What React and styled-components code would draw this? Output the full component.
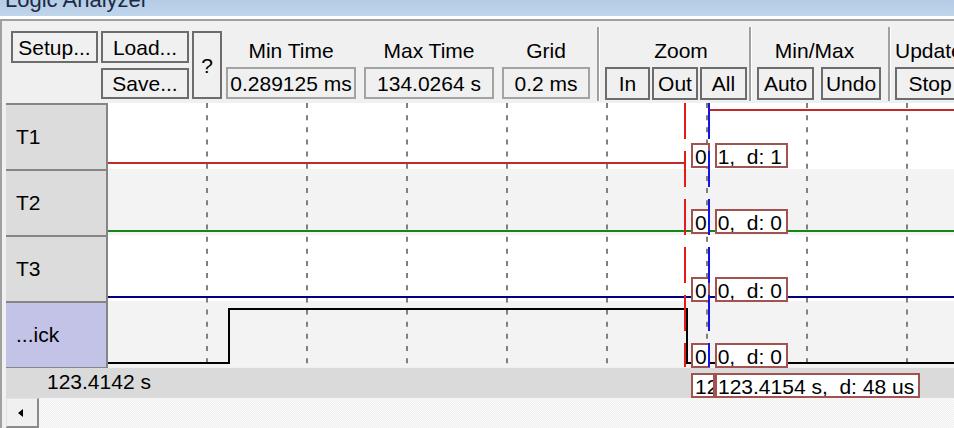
import React from 'react'
import styled, { createGlobalStyle } from 'styled-components'

const GlobalStyle = createGlobalStyle`
  html, body {
    margin: 0;
    padding: 0;
    background: #fff;
  }

  body {
    font-family: "Liberation Sans", Arial, sans-serif;
    font-size: 21px;
    color: #000;
    overflow: hidden;
  }
`

const Window = styled.div`
  width: 954px;
  height: 428px;
  overflow: hidden;
  display: flex;
  flex-direction: column;
`

const TitleBar = styled.div`
  flex-shrink: 0;
  height: 16px;
  margin-bottom: 3px;
  padding-left: 5px;
  overflow: hidden;
  background: linear-gradient(#b4cce5, #bfd5ec);
`

const TitleText = styled.div`
  margin-top: -12px;
  font-size: 22px;
  line-height: 24px;
  color: #1b2a44;
  white-space: nowrap;
`

const Frame = styled.div`
  flex: 1;
  min-height: 0;
  display: flex;
  flex-direction: column;
  background: #f0f0f0;
  border-top: 2px solid #a0a0a0;
  border-left: 2px solid #a0a0a0;
`

const Toolbar = styled.div`
  flex-shrink: 0;
  height: 82px;
  box-sizing: border-box;
  display: flex;
  align-items: flex-start;
  padding: 10px 0 0 9px;
  overflow: hidden;
  white-space: nowrap;
`

const FileGroup = styled.div`
  display: grid;
  grid-template-columns: 87px 88px 30px;
  grid-template-rows: 32px 31px;
  column-gap: 3px;
  row-gap: 5px;
`

const Button = styled.button`
  box-sizing: border-box;
  flex-shrink: 0;
  width: ${p => (p.$w ? `${p.$w}px` : 'auto')};
  height: ${p => (p.$h ? `${p.$h}px` : 'auto')};
  grid-column: ${p => p.$col || 'auto'};
  grid-row: ${p => p.$row || 'auto'};
  margin: 0;
  padding: 0;
  display: flex;
  align-items: center;
  justify-content: center;
  border: 2px solid #6c6c6c;
  background: #f0f0f0;
  font: inherit;
  line-height: 1;
  color: #000;
`

const Field = styled.div`
  flex-shrink: 0;
  display: flex;
  flex-direction: column;
  width: ${p => p.$w}px;
  margin-left: ${p => p.$ml}px;
`

const Caption = styled.div`
  height: 36px;
  box-sizing: border-box;
  padding: 9px ${p => p.$pr || 0}px 0 ${p => p.$pl || 0}px;
  line-height: 21px;
  text-align: ${p => p.$align || 'center'};
`

const ValueBox = styled.div`
  height: 32px;
  box-sizing: border-box;
  border: 2px solid #a3a3a3;
  line-height: 29px;
  text-align: center;
  overflow: hidden;
`

const Separator = styled.div`
  flex-shrink: 0;
  align-self: stretch;
  width: 2px;
  margin: -4px 0 2px ${p => p.$ml}px;
  background: #a0a0a0;
  border-right: 1px solid #fff;
`

const ButtonRow = styled.div`
  display: flex;
  gap: ${p => p.$gap}px;
`

const Chart = styled.div`
  flex-shrink: 0;
  display: flex;
  height: 265px;
  margin-left: 4px;
`

const Labels = styled.div`
  flex-shrink: 0;
  width: 102px;
  display: flex;
  flex-direction: column;
`

const SignalLabel = styled.div`
  height: 66px;
  box-sizing: border-box;
  display: flex;
  align-items: center;
  padding-left: 10px;
  background: ${p => (p.$active ? '#c3c3e8' : '#dcdcdc')};
  border-top: 2px solid #858585;
  border-right: 2px solid #858585;

  &:last-child {
    height: 67px;
    border-bottom: 1px solid #858585;
  }
`

const Plot = styled.div`
  position: relative;
  flex: 1;
  display: flex;
  flex-direction: column;
  overflow: hidden;
`

const Band = styled.div`
  flex-shrink: 0;
  height: 66px;
  background: ${p => (p.$shade ? '#f3f3f3' : '#fff')};
`

const Layer = styled.svg`
  position: absolute;
  left: 0;
  top: 0;
  pointer-events: none;
`

// value read-outs laid over the traces next to the cursors
const TagPair = styled.div`
  position: absolute;
  left: ${p => p.$left}px;
  top: ${p => p.$top}px;
  display: flex;
  gap: ${p => p.$gap}px;
`

const Tag = styled.div`
  height: 25px;
  max-width: ${p => (p.$max ? `${p.$max}px` : 'none')};
  box-sizing: border-box;
  padding: ${p => (p.$narrow ? '0 1px 0 2px' : '0 4px 0 1px')};
  overflow: hidden;
  border: 2px solid #a35252;
  background: #fff;
  line-height: 24px;
  white-space: pre;
`

const TimeBar = styled.div`
  position: relative;
  flex-shrink: 0;
  height: 30px;
  margin-left: 4px;
  padding-left: 41px;
  background: #dadada;
  line-height: 28px;
  white-space: nowrap;
`

const ScrollBar = styled.div`
  flex: 1;
  display: flex;
  margin-left: 4px;
  background-color: #f6f6f6;
  background-image: repeating-conic-gradient(#efefef 0 25%, #fbfbfb 0 50%);
  background-size: 2px 2px;
`

const ScrollButton = styled.div`
  width: 33px;
  box-sizing: border-box;
  display: flex;
  align-items: center;
  justify-content: center;
  background: #f0f0f0;
  border-top: 1px solid #e2e2e2;
  border-left: 1px solid #e2e2e2;
  border-right: 2px solid #8a8a8a;
  border-bottom: 2px solid #8a8a8a;
`

const Arrow = styled.span`
  width: 0;
  height: 0;
  margin-right: 4px;
  border-top: 4px solid transparent;
  border-bottom: 4px solid transparent;
  border-right: 5px solid #000;
`

const GRID_X = [99, 199, 299, 399, 499, 599, 699, 799]

const signals = [
  { name: 'T1', tagTop: 40, value: '1,  d: 1' },
  { name: 'T2', tagTop: 106, value: '0,  d: 0' },
  { name: 'T3', tagTop: 174, value: '0,  d: 0' },
  { name: '...ick', tagTop: 240, value: '0,  d: 0' },
]

const Traces = () => (
  <Layer width="846" height="264">
    {GRID_X.map(x => (
      <line key={x} x1={x} x2={x} y1="0" y2="264" stroke="#808080" strokeWidth="2" strokeDasharray="5 7.15" />
    ))}
    <g fill="none" strokeWidth="2">
      <polyline points="0,60 577,60" stroke="#c12a2a" />
      <polyline points="602,7 846,7" stroke="#c12a2a" />
      <polyline points="0,128 846,128" stroke="#138813" />
      <polyline points="0,194 846,194" stroke="#000080" />
      <polyline points="0,260 121,260 121,206 579,206 579,260 846,260" stroke="#000" />
    </g>
  </Layer>
)

const Cursors = () => (
  <Layer width="846" height="264">
    <line x1="577" x2="577" y1="0" y2="264" stroke="#e31b1b" strokeWidth="2" strokeDasharray="36 12" />
    <line x1="601" x2="601" y1="0" y2="264" stroke="#1414e6" strokeWidth="2" strokeDasharray="36 12" />
  </Layer>
)

const App = () => (
  <Window>
    <GlobalStyle />
    <TitleBar>
      <TitleText>Logic Analyzer</TitleText>
    </TitleBar>

    <Frame>
      <Toolbar>
        <FileGroup>
          <Button $col="1" $row="1">Setup...</Button>
          <Button $col="2" $row="1">Load...</Button>
          <Button $col="2" $row="2">Save...</Button>
          <Button $col="3" $row="1 / span 2">?</Button>
        </FileGroup>

        <Field $w={130} $ml={4}>
          <Caption>Min Time</Caption>
          <ValueBox>0.289125 ms</ValueBox>
        </Field>
        <Field $w={130} $ml={8}>
          <Caption>Max Time</Caption>
          <ValueBox>134.0264 s</ValueBox>
        </Field>
        <Field $w={88} $ml={8}>
          <Caption>Grid</Caption>
          <ValueBox>0.2 ms</ValueBox>
        </Field>

        <Separator $ml={7} />

        <Field $w={142} $ml={5}>
          <Caption $pl={10}>Zoom</Caption>
          <ButtonRow $gap={2}>
            <Button $w={45} $h={33}>In</Button>
            <Button $w={46} $h={33}>Out</Button>
            <Button $w={47} $h={33}>All</Button>
          </ButtonRow>
        </Field>

        <Separator $ml={2} />

        <Field $w={124} $ml={5}>
          <Caption $pr={9}>Min/Max</Caption>
          <ButtonRow $gap={7}>
            <Button $w={57} $h={33}>Auto</Button>
            <Button $w={60} $h={33}>Undo</Button>
          </ButtonRow>
        </Field>

        <Separator $ml={7} />

        <Field $w={80} $ml={4}>
          <Caption $align="left">Update</Caption>
          <Button $w={70} $h={33}>Stop</Button>
        </Field>
      </Toolbar>

      <Chart>
        <Labels>
          {signals.map((s, i) => (
            <SignalLabel key={s.name} $active={i === 3}>{s.name}</SignalLabel>
          ))}
        </Labels>

        <Plot>
          {signals.map((s, i) => (
            <Band key={s.name} $shade={i % 2 === 1} />
          ))}
          <Traces />
          {signals.map(s => (
            <TagPair key={s.name} $left={583} $top={s.tagTop} $gap={5}>
              <Tag $narrow>0</Tag>
              <Tag>{s.value}</Tag>
            </TagPair>
          ))}
          <Cursors />
        </Plot>
      </Chart>

      <TimeBar>
        123.4142 s
        <TagPair $left={685} $top={5} $gap={0}>
          <Tag $max={24} $narrow>123.4154 s</Tag>
          <Tag>{'123.4154 s,  d: 48 us'}</Tag>
        </TagPair>
      </TimeBar>

      <ScrollBar>
        <ScrollButton>
          <Arrow />
        </ScrollButton>
      </ScrollBar>
    </Frame>
  </Window>
)

export default App
